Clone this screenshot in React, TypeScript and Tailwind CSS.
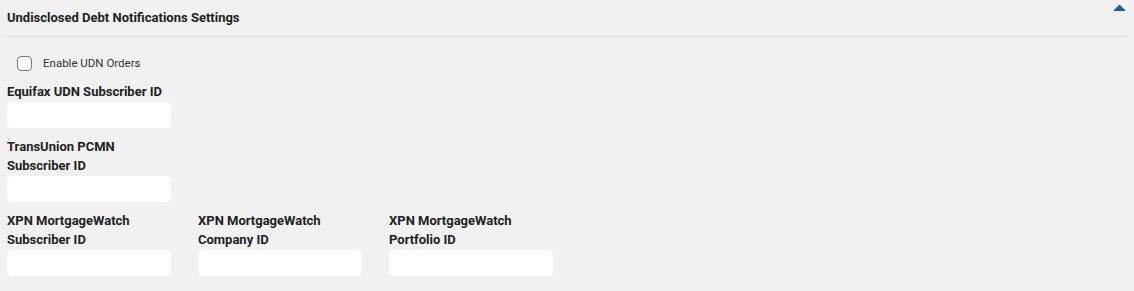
import React from 'react';

const Field = ({ label }: { label: React.ReactNode }) => (
  <div className="w-[164px] flex flex-col">
    <label className="text-[13px] font-bold leading-[19px] text-[#222]">{label}</label>
    <input type="text" className="mt-[1px] h-[26px] w-[164px] rounded-[5px] bg-white outline-none" />
  </div>
);

export default function App() {
  return (
    <div className="min-h-[291px] w-[1134px] bg-[#f1f1f1] px-[7px] pt-[8px] font-['Roboto',sans-serif] text-[#222]">
      {/* Section header */}
      <div className="flex items-start justify-between border-b border-[#dcdcdc] pb-[9px]">
        <h2 className="pt-[1px] text-[13px] font-bold leading-[18px]">Undisclosed Debt Notifications Settings</h2>
        <svg width="13" height="7" viewBox="0 0 13 7" className="-mt-[4px] mr-[1px]">
          <path d="M1 6.5 L6.5 1 L12 6.5 Z" fill="#1b5ea0" stroke="#1b5ea0" strokeLinejoin="round" />
        </svg>
      </div>

      <div className="flex items-center pl-[10px] pt-[19px]">
        <span className="h-[15px] w-[15px] rounded-[4px] border border-[#7a7a7a] bg-white" />
        <span className="ml-[11px] text-[11.5px] leading-[15px] text-[#333]">Enable UDN Orders</span>
      </div>

      <div className="mt-[11px] flex flex-col gap-[9px]">
        <Field label="Equifax UDN Subscriber ID" />
        <Field label="TransUnion PCMN Subscriber ID" />
        <div className="flex gap-[27px]">
          <Field label="XPN MortgageWatch Subscriber ID" />
          <Field label="XPN MortgageWatch Company ID" />
          <Field label="XPN MortgageWatch Portfolio ID" />
        </div>
      </div>
    </div>
  );
}
